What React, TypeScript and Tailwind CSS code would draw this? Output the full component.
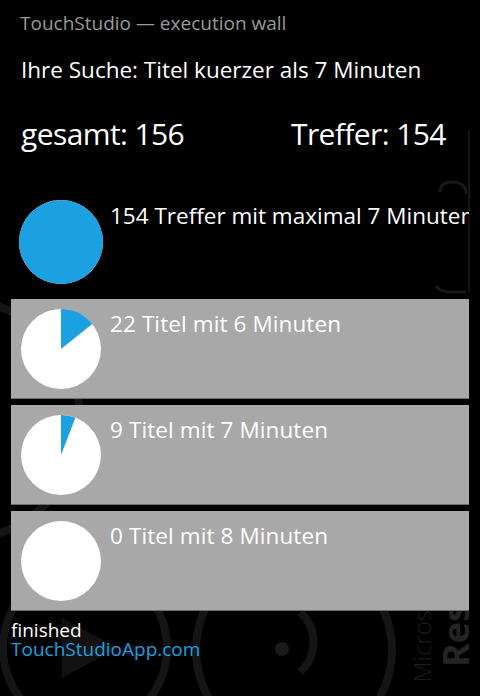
const font = { fontFamily: '"Open Sans", "Noto Sans", sans-serif' };

type Bucket = { count: number; minutes: number };

const total = 154;
const buckets: Bucket[] = [
  { count: 22, minutes: 6 },
  { count: 9, minutes: 7 },
  { count: 0, minutes: 8 },
];

function slicePath(fraction: number, r: number) {
  const angle = fraction * 2 * Math.PI;
  const x = r + r * Math.sin(angle);
  const y = r - r * Math.cos(angle);
  const large = fraction > 0.5 ? 1 : 0;
  return `M ${r} ${r} L ${r} 0 A ${r} ${r} 0 ${large} 1 ${x} ${y} Z`;
}

function Pie({ fraction, size }: { fraction: number; size: number }) {
  const r = size / 2;
  return (
    <svg width={size} height={size} viewBox={`0 0 ${size} ${size}`} className="shrink-0">
      <circle cx={r} cy={r} r={r} fill="#ffffff" />
      {fraction >= 0.999 ? (
        <circle cx={r} cy={r} r={r} fill="#1ba1e2" />
      ) : fraction > 0 ? (
        <path d={slicePath(fraction, r)} fill="#1ba1e2" />
      ) : null}
    </svg>
  );
}

// faint logo watermark behind the page
function Watermark() {
  return (
    <svg
      width={480}
      height={696}
      viewBox="0 0 480 696"
      className="absolute inset-0"
      fill="none"
      stroke="#151515"
      strokeWidth={8}
    >
      <circle cx={85} cy={648} r={82} />
      <path d="M 62 618 L 118 648 L 62 678 Z" fill="#121212" stroke="none" />
      <circle cx={294} cy={650} r={98} />
      <path d="M 300 612 A 40 40 0 0 1 300 672" />
      <circle cx={282} cy={649} r={7} fill="#1a1a1a" stroke="none" />
      <circle cx={-40} cy={420} r={120} />
      <path d="M 469 130 L 469 292" stroke="#161616" strokeWidth={2} />
      <path d="M 440 192 Q 440 182 452 182 Q 466 182 466 194" stroke="#181818" strokeWidth={3} />
      <path d="M 436 286 Q 440 292 452 292 L 466 292" stroke="#181818" strokeWidth={3} />
    </svg>
  );
}

export default function App() {
  return (
    <div className="relative w-[480px] h-[696px] overflow-hidden bg-black" style={font}>
      <Watermark />
      <div className="absolute right-[6px] bottom-[14px] flex items-end gap-[4px]">
        <span className="[writing-mode:vertical-rl] rotate-180 text-[24px] font-light leading-none text-[#1c1c1c]">
          Micros
        </span>
        <span className="[writing-mode:vertical-rl] rotate-180 text-[36px] font-bold leading-none text-[#242424] mb-[15px]">
          Res
        </span>
      </div>

      <div className="relative flex flex-col">
        <div className="pl-[20px] pt-[9px] text-[19px] leading-[28px] text-[#9a9a9a]">
          TouchStudio — execution wall
        </div>

        <div className="pl-[21px] mt-[17px] text-[22.5px] leading-[31px] text-white">
          Ihre Suche: Titel kuerzer als 7 Minuten
        </div>

        <div className="flex pl-[21px] mt-[29px] text-[30px] leading-[40px] tracking-[-0.6px] text-white">
          <span className="w-[270px]">gesamt: 156</span>
          <span>Treffer: 154</span>
        </div>

        <div className="flex mt-[46px] ml-[19px] mr-[11px] h-[99px] overflow-hidden">
          <Pie fraction={1} size={84} />
          <div className="ml-[7px] whitespace-nowrap text-[22.5px] leading-[31px] text-white">
            {total} Treffer mit maximal 7 Minuten
          </div>
        </div>

        <div className="flex flex-col gap-[6px] mx-[11px]">
          {buckets.map((b) => (
            <div
              key={b.minutes}
              className="flex h-[100px] bg-[#a8a8a8] border-b border-[#6e6e6e]"
            >
              <div className="ml-[10px] mt-[10px]">
                <Pie fraction={b.count / total} size={80} />
              </div>
              <div className="ml-[9px] mt-[9px] whitespace-nowrap text-[22.5px] leading-[31px] tracking-[0.1px] text-white">
                {b.count} Titel mit {b.minutes} Minuten
              </div>
            </div>
          ))}
        </div>

        <div className="pl-[11px] mt-[10px] text-[19px] leading-[19px]">
          <div className="text-white">finished</div>
          <div className="text-[#1ba1e2]">TouchStudioApp.com</div>
        </div>
      </div>
    </div>
  );
}
